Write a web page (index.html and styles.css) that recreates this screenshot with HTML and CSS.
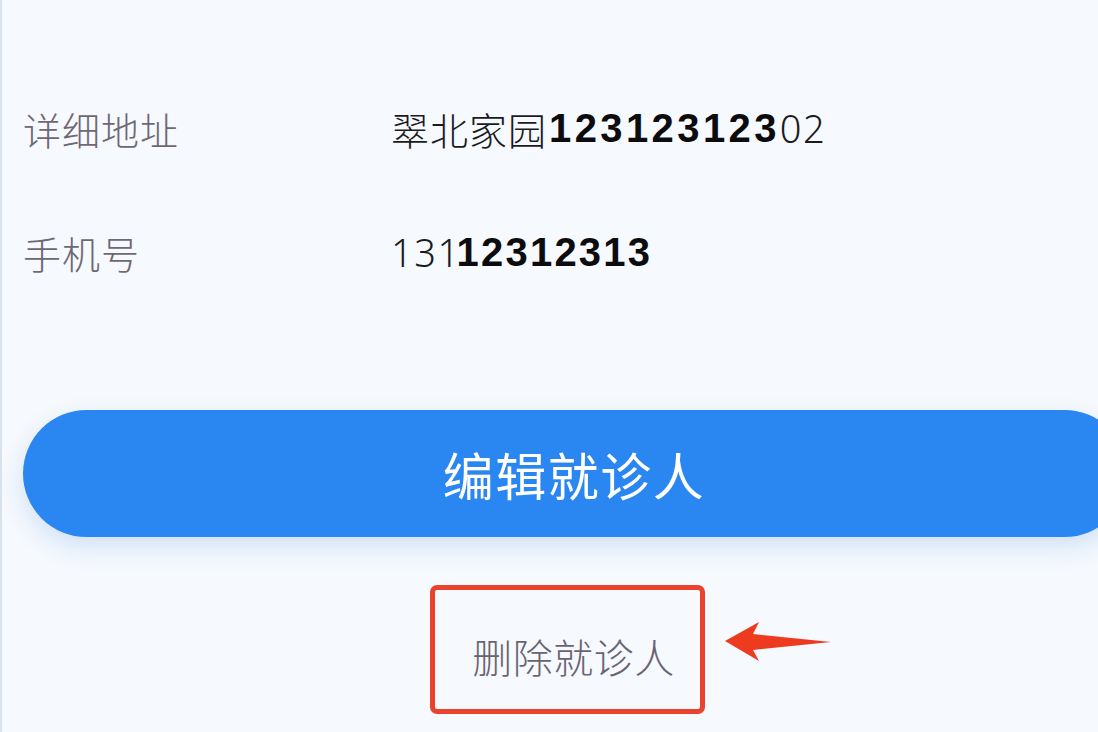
FILE: index.html
```html
<!DOCTYPE html>
<html lang="zh-CN">
<head>
<meta charset="utf-8">
<title>就诊人信息</title>
<link rel="stylesheet" href="styles.css">
</head>
<body>
<div class="page">
  <div class="info">
    <div class="row">
      <div class="label">详细地址</div>
      <div class="value">翠北家园<span class="edit addr">123123123</span><span class="num">02</span></div>
    </div>
    <div class="row">
      <div class="label">手机号</div>
      <div class="value"><span class="num">131</span><span class="edit phone">12312313</span></div>
    </div>
  </div>
  <div class="btn-wrap">
    <div class="btn">编辑就诊人</div>
  </div>
  <div class="del-wrap">
    <div class="del-box">删除就诊人</div>
    <svg class="arrow" width="112" height="42" viewBox="0 0 112 42">
      <polygon points="3,20 37,1 31,13 109,21 31,29 37,40" fill="#ee3a1f"/>
    </svg>
  </div>
</div>
</body>
</html>
```

FILE: styles.css
```css
html, body {
  margin: 0;
  padding: 0;
}
body {
  background: #f6f9fd;
  width: 1098px;
  height: 732px;
  overflow: hidden;
  font-family: "Noto Sans CJK SC", "Noto Sans", sans-serif;
}
.page {
  height: 732px;
  border-left: 2px solid #d9e1ea;
  box-sizing: border-box;
  display: flex;
  flex-direction: column;
}
.info {
  padding-top: 66px;
  display: flex;
  flex-direction: column;
}
.row {
  height: 124px;
  display: flex;
  align-items: center;
}
.label {
  width: 368px;
  padding-left: 21px;
  font-size: 38px;
  font-weight: 300;
  color: #6e6775;
  letter-spacing: 1px;
}
.value {
  font-size: 38px;
  font-weight: 300;
  color: #1b1b1e;
  letter-spacing: 1px;
  display: flex;
  align-items: center;
}
.num {
  font-family: "Noto Sans", "Liberation Sans", sans-serif;
  font-weight: 300;
  font-size: 38px;
  letter-spacing: 1.5px;
}
.edit {
  font-family: "Liberation Sans", Arial, sans-serif;
  font-weight: 700;
  font-size: 40px;
  color: #0c0c0e;
}
.edit.addr {
  margin-left: 2px;
  letter-spacing: 3.4px;
}
.edit.phone {
  margin-left: -4px;
  letter-spacing: 2.2px;
}
.btn-wrap {
  margin-top: 96px;
  padding-left: 21px;
  margin-right: -30px;
}
.btn {
  height: 127px;
  border-radius: 64px;
  background: #2a87f1;
  box-shadow: 0 10px 24px rgba(42, 120, 220, 0.18);
  color: #ffffff;
  font-size: 51px;
  font-weight: 400;
  letter-spacing: 1.5px;
  display: flex;
  align-items: center;
  justify-content: center;
  text-indent: -3px;
}
.del-wrap {
  position: relative;
  margin-top: 48px;
  display: flex;
  justify-content: flex-start;
  padding-left: 428px;
}
.del-box {
  width: 275px;
  height: 129px;
  box-sizing: border-box;
  border: 5px solid #e9432d;
  border-radius: 7px;
  display: flex;
  align-items: center;
  justify-content: center;
  padding-top: 12px;
  padding-left: 12px;
  font-size: 40px;
  font-weight: 300;
  color: #6a6472;
  letter-spacing: 0.5px;
}
.arrow {
  position: absolute;
  left: 720px;
  top: 36px;
}
```
